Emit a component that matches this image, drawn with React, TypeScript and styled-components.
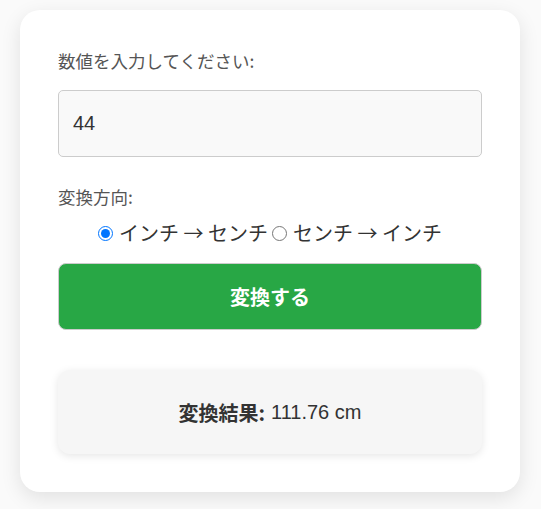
import { useState } from "react";
import styled, { createGlobalStyle } from "styled-components";

const GlobalStyle = createGlobalStyle`
  body {
    margin: 0;
    background-color: #fafafa;
    font-family: "Liberation Sans", Arial, "Noto Sans CJK JP", sans-serif;
    color: #333;
  }
`;

function App() {
  const [value, setValue] = useState("44");
  const [direction, setDirection] = useState("in2cm");
  const [result] = useState("111.76 cm");

  return (
    <>
      <GlobalStyle />
      <Page>
        <Card>
          <Label htmlFor="num">数値を入力してください:</Label>
          <Input
            id="num"
            type="number"
            value={value}
            onChange={(e) => setValue(e.target.value)}
          />
          <Label as="p">変換方向:</Label>
          <RadioRow>
            <RadioLabel>
              <input
                type="radio"
                name="dir"
                checked={direction === "in2cm"}
                onChange={() => setDirection("in2cm")}
              />
              インチ → センチ
            </RadioLabel>
            <RadioLabel>
              <input
                type="radio"
                name="dir"
                checked={direction === "cm2in"}
                onChange={() => setDirection("cm2in")}
              />
              センチ → インチ
            </RadioLabel>
          </RadioRow>
          <ConvertButton>変換する</ConvertButton>
          <Result>
            <strong>変換結果:</strong> {result}
          </Result>
        </Card>
      </Page>
    </>
  );
}

const Page = styled.div`
  padding: 10px 21px 17px 20px;
`;

const Card = styled.div`
  width: 500px;
  box-sizing: border-box;
  background-color: white;
  border-radius: 20px;
  padding: 38px 38px 38px 38px;
  box-shadow: 0 6px 20px rgba(0, 0, 0, 0.1);
  display: flex;
  flex-direction: column;
`;

const Label = styled.label`
  display: block;
  margin: 0;
  font-size: 17.5px;
  line-height: 26px;
  color: #555;
  font-family: "Noto Sans CJK JP", sans-serif;
`;

const Input = styled.input`
  margin: 16px 0 27px;
  height: 67px;
  box-sizing: border-box;
  padding: 0 14px;
  font-size: 20px;
  font-family: "Liberation Sans", Arial, sans-serif;
  color: #333;
  background-color: #f9f9f9;
  border: 1px solid #ccc;
  border-radius: 5px;
  outline: none;
  -moz-appearance: textfield;
  &::-webkit-inner-spin-button,
  &::-webkit-outer-spin-button {
    -webkit-appearance: none;
  }
`;

const RadioRow = styled.div`
  display: flex;
  justify-content: center;
  gap: 4px;
  margin: 9px 0 16px;
`;

const RadioLabel = styled.label`
  display: flex;
  align-items: center;
  font-size: 20px;
  line-height: 28px;
  color: #333;
  font-family: "Noto Sans CJK JP", sans-serif;
  input {
    margin: 0 6px 0 0;
    width: 15px;
    height: 15px;
  }
`;

const ConvertButton = styled.button`
  height: 67px;
  background-color: #28a745;
  color: white;
  border: 1px solid #ccc;
  border-radius: 8px;
  font-size: 20px;
  font-weight: bold;
  font-family: "Noto Sans CJK JP", sans-serif;
  cursor: pointer;
`;

const Result = styled.div`
  margin-top: 40px;
  height: 84px;
  display: flex;
  align-items: center;
  justify-content: center;
  background-color: #f6f6f6;
  border-radius: 12px;
  box-shadow: 0 2px 8px rgba(0, 0, 0, 0.1);
  font-size: 20px;
  color: #333;
  strong {
    font-family: "Noto Sans CJK JP", sans-serif;
    margin-right: 6px;
  }
`;

export default App;
